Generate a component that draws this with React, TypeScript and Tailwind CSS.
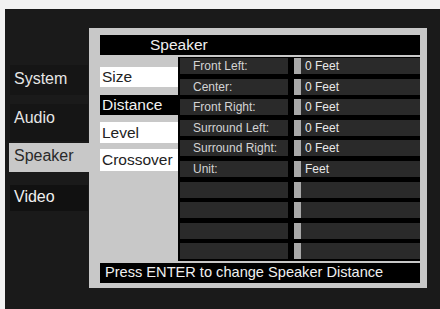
import React from "react";

const rows: [string, string][] = [
  ["Front Left:", "0 Feet"],
  ["Center:", "0 Feet"],
  ["Front Right:", "0 Feet"],
  ["Surround Left:", "0 Feet"],
  ["Surround Right:", "0 Feet"],
  ["Unit:", "Feet"],
  ["", ""],
  ["", ""],
  ["", ""],
  ["", ""],
];

export default function App() {
  return (
    <div className="w-[440px] h-[309px] bg-[#f2f2f2] pt-[9px] pl-[5px] font-['Liberation_Sans',Arial,sans-serif] overflow-hidden">
      <div className="flex h-[300px] bg-[#1a1a1a]">
        {/* left menu */}
        <div className="w-[84px] flex flex-col">
          <div className="mt-[56px] ml-[5px] w-[78px] h-[30px] bg-[#151515] pt-[5px] pl-[4px] text-[16px] leading-[18px] text-[#e6e6e6]">System</div>
          <div className="mt-[9px] ml-[5px] w-[78px] h-[37px] bg-[#151515] pt-[5px] pl-[4px] text-[16px] leading-[18px] text-[#e6e6e6]">Audio</div>
          <div className="mt-[2px] ml-[4px] w-[80px] h-[29px] bg-[#c8c8c8] pt-[4px] pl-[5px] text-[16px] leading-[18px] text-[#2a2a2a]">Speaker</div>
          <div className="mt-[13px] ml-[5px] w-[78px] h-[26px] bg-[#111111] pt-[3px] pl-[4px] text-[16px] leading-[18px] text-[#f0f0f0]">Video</div>
        </div>
        {/* panel */}
        <div className="mt-[19px] h-[260px] w-[338px] bg-[#c8c8c8] flex flex-col pl-[11px] pr-[7px] pt-[7px]">
          <div className="h-[20px] bg-black flex items-center pl-[50px] text-[15.5px] text-[#f0f0f0]">Speaker</div>
          <div className="mt-[2px] h-[204px] flex">
            <div className="w-[78px] flex flex-col text-[15.5px] leading-[20px]">
              <div className="mt-[10px] h-[20px] bg-white pl-[2px] text-[#222]">Size</div>
              <div className="mt-[8px] h-[20px] bg-black pl-[2px] text-[#f2f2f2]">Distance</div>
              <div className="mt-[7px] h-[21px] bg-white pl-[2px] text-[#222] pt-[1px]">Level</div>
              <div className="mt-[6px] h-[22px] bg-white pl-[2px] text-[#222] pt-[1px]">Crossover</div>
            </div>
            <div className="w-[242px] bg-black pl-[2px] pt-[1px] flex flex-col gap-[4.6px]">
              {rows.map(([label, value], i) => (
                <div key={i} className="h-[16px] flex gap-[6px] text-[12px] leading-[16px]">
                  <div className="w-[108px] bg-[#2a2a2a] pl-[13px] text-[#d4d4d4]">{label}</div>
                  <div className="w-[126px] bg-[#2a2a2a] flex">
                    <div className="w-[7px] bg-[#a8a8a8]" />
                    <div className="pl-[4px] text-[#e8e8e8]">{value}</div>
                  </div>
                </div>
              ))}
            </div>
          </div>
          <div className="mt-[2px] h-[20px] bg-black flex items-center pl-[5px] text-[14.6px] text-[#f0f0f0] whitespace-nowrap">
            Press ENTER to change Speaker Distance
          </div>
        </div>
      </div>
    </div>
  );
}
